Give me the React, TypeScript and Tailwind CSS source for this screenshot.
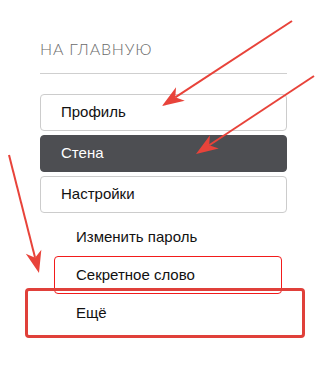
const mainItems = [
  { label: "Профиль", active: false },
  { label: "Стена", active: true },
  { label: "Настройки", active: false },
];

const subItems = ["Изменить пароль", "Секретное слово", "Ещё"];

function Arrows() {
  // annotation arrows drawn over the menu
  const arrows = [
    { x1: 292, y1: 21, x2: 162, y2: 106 },
    { x1: 314, y1: 76, x2: 196, y2: 154 },
    { x1: 9, y1: 155, x2: 39, y2: 273 },
  ];
  return (
    <svg className="absolute inset-0 pointer-events-none" width="322" height="374">
      {arrows.map((a, i) => {
        const dx = a.x2 - a.x1;
        const dy = a.y2 - a.y1;
        const len = Math.hypot(dx, dy);
        const ux = dx / len;
        const uy = dy / len;
        const hl = 22;
        const hw = 8;
        const bx = a.x2 - ux * hl;
        const by = a.y2 - uy * hl;
        const p1 = `${bx - uy * hw},${by + ux * hw}`;
        const p2 = `${bx + uy * hw},${by - ux * hw}`;
        const notchX = a.x2 - ux * hl * 0.72;
        const notchY = a.y2 - uy * hl * 0.72;
        return (
          <g key={i} fill="#e8433a" stroke="#e8433a">
            <line x1={a.x1} y1={a.y1} x2={notchX} y2={notchY} strokeWidth="2" />
            <polygon points={`${a.x2},${a.y2} ${p1} ${notchX},${notchY} ${p2}`} stroke="none" />
          </g>
        );
      })}
    </svg>
  );
}

export default function App() {
  return (
    <div className="relative w-[322px] h-[374px] bg-white overflow-hidden font-['Liberation_Sans',Arial,sans-serif]">
      <div className="pt-[39px] pl-10 w-[287px]">
        <div className="pb-[14px] border-b border-[#cfcfcf]">
          <a className="block text-[16px] leading-[20px] font-light tracking-[0.8px] text-[#6b6b6b] uppercase font-['Lato',sans-serif]">
            На главную
          </a>
        </div>
        <div className="mt-5 flex flex-col gap-1">
          {mainItems.map((it) => (
            <div
              key={it.label}
              className={
                it.active
                  ? "h-[37px] flex items-center pl-5 rounded border border-[#4d4e52] bg-[#4d4e52] text-white text-[15px]"
                  : "h-[37px] flex items-center pl-5 rounded border border-[#cccccc] bg-white text-[#111] text-[15px]"
              }
            >
              {it.label}
            </div>
          ))}
        </div>
        <div className="mt-[5px] flex flex-col">
          {subItems.map((s) => (
            <div key={s} className="h-[38px] flex items-center pl-9 text-[15px] text-[#111]">
              {s}
            </div>
          ))}
        </div>
      </div>
      <div className="absolute left-[54px] top-[256px] w-[228px] h-[38px] border border-[#f21b1b] rounded-[4px] pointer-events-none" />
      <div className="absolute left-[25px] top-[288px] w-[280px] h-[50px] border-[3px] border-[#e0403a] rounded-[4px] pointer-events-none" />
      <Arrows />
    </div>
  );
}
